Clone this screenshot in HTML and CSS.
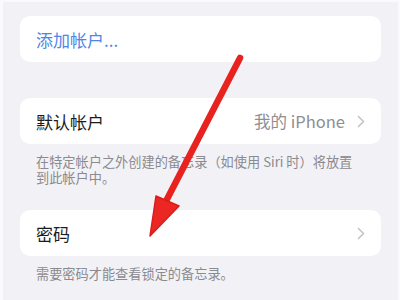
FILE: index.html
```html
<!DOCTYPE html>
<html lang="zh-CN">
<head>
<meta charset="utf-8">
<link rel="stylesheet" href="styles.css">
</head>
<body>
<div class="screen">
  <div class="group first">
    <div class="card"><span class="link">添加帐户...</span></div>
  </div>
  <div class="group second">
    <div class="card row">
      <span class="label">默认帐户</span>
      <span class="value">我的 iPhone</span>
      <span class="chev"><svg width="8" height="13" viewBox="0 0 8 13"><path d="M1.5 1.5 L6.5 6.5 L1.5 11.5" fill="none" stroke="#c3c3c8" stroke-width="1.6" stroke-linecap="round" stroke-linejoin="round"/></svg></span>
    </div>
    <p class="note">在特定帐户之外创建的备忘录（如使用 Siri 时）将放置到此帐户中。</p>
  </div>
  <div class="group">
    <div class="card row">
      <span class="label">密码</span>
      <span class="value"></span>
      <span class="chev"><svg width="8" height="13" viewBox="0 0 8 13"><path d="M1.5 1.5 L6.5 6.5 L1.5 11.5" fill="none" stroke="#c3c3c8" stroke-width="1.6" stroke-linecap="round" stroke-linejoin="round"/></svg></span>
    </div>
    <p class="note">需要密码才能查看锁定的备忘录。</p>
  </div>
  <svg class="arrow" width="400" height="300" viewBox="0 0 400 300">
    <line x1="240" y1="58" x2="164" y2="205" stroke="#e8231f" stroke-width="6.5" stroke-linecap="round"/>
    <polygon points="156,196 179,206 150,236" fill="#ec2622" stroke="#d81d1a" stroke-width="1.5" stroke-linejoin="round"/>
  </svg>
</div>
</body>
</html>
```
FILE: styles.css
```css
html, body {
  margin: 0;
  padding: 0;
  width: 400px;
  height: 300px;
  overflow: hidden;
  background: #fafafc;
}
.screen {
  position: relative;
  margin: 2px 2px 0 3px;
  height: 295px;
  background: #f2f2f6;
  font-family: "Noto Sans CJK SC", "Noto Sans", sans-serif;
  padding: 14px 17px 0 17px;
}
.group.first { margin-bottom: 36px; }
.group.second { margin-bottom: 25px; }
.card {
  background: #ffffff;
  border-radius: 10px;
  height: 46px;
  display: flex;
  align-items: center;
  padding: 0 16px;
  box-sizing: border-box;
}
.link {
  color: #4f86e4;
  font-size: 17px;
}
.row .label {
  color: #1c1c1e;
  font-size: 17px;
  flex: 1;
}
.row .value {
  color: #8e8e93;
  font-size: 16.5px;
  margin-right: 12px;
}
.chev {
  display: flex;
  align-items: center;
}
.note {
  margin: 10px 16px 0 16px;
  color: #8a8a8f;
  font-size: 13.2px;
  line-height: 15.5px;
}
.arrow {
  position: absolute;
  left: -3px;
  top: -2px;
  pointer-events: none;
}
```
